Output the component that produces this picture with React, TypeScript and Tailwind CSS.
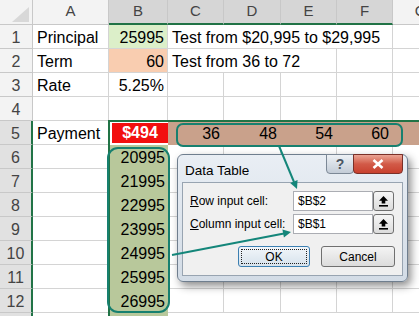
import React from "react"

const COLS = ["w-[76px]", "w-[59px]", "w-[56px]", "w-[57px]", "w-[56px]", "w-[56px]", "w-[56px]"]
const LETTERS = ["A", "B", "C", "D", "E", "F", "G"]

type CellDef = {
  text?: string
  w: string
  align?: "left" | "right"
  cls?: string
  noBorder?: boolean
}

function Cell({ c }: { c: CellDef }) {
  return (
    <div
      className={`${c.w} shrink-0 whitespace-nowrap overflow-visible pt-[3px] leading-[20px] ${
        c.noBorder ? "" : "border-r border-b border-[#d4d4d4]"
      } ${c.align === "right" ? "text-right pr-[3px]" : "pl-[4px]"} ${c.cls ?? ""}`}
    >
      {c.text}
    </div>
  )
}

function RowHead({ n, selected }: { n: number; selected: boolean }) {
  return (
    <div
      className={`w-[33px] shrink-0 text-center text-[#444] pt-[3px] leading-[20px] border-b border-[#c8c8c8] ${
        selected ? "bg-[#e1e1e1] border-r-2 border-r-[#217346]" : "bg-[#f3f3f3] border-r border-r-[#c8c8c8]"
      }`}
    >
      {n}
    </div>
  )
}

function blankRow(from: number): CellDef[] {
  return COLS.slice(from).map((w) => ({ w }))
}

function UpIcon() {
  return (
    <svg width="11" height="12" viewBox="0 0 11 12">
      <path d="M5.5 1 L10 5.8 H7.3 V8.6 H3.7 V5.8 H1 Z" fill="#000" />
      <rect x="1" y="10" width="9" height="1.6" fill="#000" />
    </svg>
  )
}

export default function App() {
  const rows: CellDef[][] = [
    [
      { w: COLS[0], text: "Principal" },
      { w: COLS[1], text: "25995", align: "right", cls: "bg-[#dcefc9]" },
      { w: "w-[225px]", text: "Test from $20,995 to $29,995" },
      ...blankRow(6),
    ],
    [
      { w: COLS[0], text: "Term" },
      { w: COLS[1], text: "60", align: "right", cls: "bg-[#f9cdb0]" },
      { w: "w-[169px]", text: "Test from 36 to 72" },
      ...blankRow(5),
    ],
    [
      { w: COLS[0], text: "Rate" },
      { w: COLS[1], text: "5.25%", align: "right" },
      ...blankRow(2),
    ],
    [...blankRow(0)],
  ]

  const amounts = ["20995", "21995", "22995", "23995", "24995", "25995", "26995"]

  return (
    <div className="relative w-[419px] h-[316px] overflow-hidden bg-white font-['Liberation_Sans',Arial,sans-serif] text-[16px] text-black">
      {/* column headers */}
      <div className="flex h-[25px]">
        <div className="w-[33px] shrink-0 bg-[#f3f3f3] border-r border-b border-[#c8c8c8] relative">
          <svg className="absolute left-[12px] top-[7px]" width="17" height="15" viewBox="0 0 17 15">
            <polygon points="17,0 17,15 0,15" fill="#d8d8d8" />
          </svg>
        </div>
        {LETTERS.map((l, i) => {
          const sel = i >= 1 && i <= 5
          return (
            <div
              key={l}
              className={`${COLS[i]} shrink-0 text-center text-[15px] text-[#444] leading-[22px] border-r border-[#c8c8c8] ${
                sel ? "bg-[#d6d6d6] border-b-2 border-b-[#217346]" : "bg-[#f3f3f3] border-b border-b-[#c8c8c8]"
              }`}
            >
              {l}
            </div>
          )
        })}
      </div>

      {rows.map((r, i) => (
        <div key={i} className="flex h-[24px]">
          <RowHead n={i + 1} selected={false} />
          {r.map((c, j) => (
            <Cell key={j} c={c} />
          ))}
        </div>
      ))}

      {/* row 5 */}
      <div className="flex h-[24px]">
        <RowHead n={5} selected />
        <Cell c={{ w: COLS[0], text: "Payment" }} />
        <div className={`${COLS[1]} shrink-0 pl-[3px] pt-[2px] pb-[2px] bg-white`}>
          <div className="h-full bg-[#f20f0f] text-white font-bold text-center leading-[20px]">$494</div>
        </div>
        {["36", "48", "54", "60"].map((v, k) => (
          <div key={v} className={`${COLS[2 + k]} shrink-0 bg-[#c9a18b] text-right pr-[4px] pt-[3px] leading-[20px]`}>
            {v}
          </div>
        ))}
        <div className="flex-1 bg-[#c9a18b]" />
      </div>

      {/* rows 6-12 */}
      {amounts.map((a, i) => (
        <div key={a} className="flex h-[24px]">
          <RowHead n={i + 6} selected />
          <Cell c={{ w: COLS[0] }} />
          <div className={`${COLS[1]} shrink-0 bg-[#b8c89b] text-right pr-[3px] pt-[3px] leading-[20px]`}>{a}</div>
          {blankRow(2).map((c, j) => (
            <Cell key={j} c={c} />
          ))}
        </div>
      ))}
      <div className="flex h-[10px]">
        <div className="w-[33px] shrink-0 bg-[#e1e1e1] border-r-2 border-r-[#217346]" />
        <div className="w-[76px] shrink-0 border-r border-[#d4d4d4]" />
        <div className="w-[59px] shrink-0 bg-[#b8c89b]" />
        <div className="flex-1" />
      </div>

      {/* selection border */}
      <div className="absolute left-[108px] top-[120px] w-[320px] h-[210px] border-t-2 border-l-2 border-[#217346] pointer-events-none" />

      {/* callout outlines */}
      <div className="absolute left-[176px] top-[123px] w-[227px] h-[24px] rounded-[7px] border-2 border-[#17806f]" />
      <div className="absolute left-[107px] top-[147px] w-[63px] h-[166px] rounded-[11px] border-2 border-[#17806f]" />

      {/* Data Table dialog */}
      <div className="absolute left-[177px] top-[154px] w-[231px] h-[128px] rounded-[6px] border border-[#6f7e8e] bg-gradient-to-b from-[#e9eef4] to-[#d3dce6] shadow-[3px_4px_8px_rgba(0,0,0,0.45)] flex flex-col font-['Liberation_Sans',Arial,sans-serif] text-[12px]">
        <div className="relative h-[27px] shrink-0">
          <div className="absolute left-[7px] top-[6px] text-[13.5px] text-black">Data Table</div>
          <div className="absolute left-[148px] top-[-1px] w-[28px] h-[20px] rounded-b-[4px] border border-[#7c8896] bg-gradient-to-b from-[#edf1f5] to-[#c3ccd7] flex items-center justify-center text-[#4a5563] font-bold text-[14px]">
            ?
          </div>
          <div className="absolute left-[175px] top-[-1px] w-[50px] h-[20px] rounded-b-[4px] border border-[#7a3028] bg-gradient-to-b from-[#eaa494] via-[#d25a48] to-[#c8402e] flex items-center justify-center">
            <svg width="12" height="10" viewBox="0 0 12 10">
              <path d="M1.5 1 L10.5 9 M10.5 1 L1.5 9" stroke="#fff" strokeWidth="2.6" />
            </svg>
          </div>
        </div>
        <div className="mx-[4px] mb-[5px] flex-1 border border-[#98a4b1] bg-[#f0f0f0] pl-[7px] pr-[7px] pt-[8px] flex flex-col">
          <div className="flex items-center h-[20px]">
            <div className="w-[103px] shrink-0">
              <span className="underline">R</span>ow input cell:
            </div>
            <div className="w-[80px] h-full border border-[#abadb3] bg-white pl-[4px] leading-[18px]">$B$2</div>
            <div className="w-[21px] h-full rounded-[3px] border border-[#707070] bg-gradient-to-b from-[#f6f6f6] to-[#dcdcdc] flex items-center justify-center">
              <UpIcon />
            </div>
          </div>
          <div className="flex items-center h-[20px] mt-[3px]">
            <div className="w-[103px] shrink-0">
              <span className="underline">C</span>olumn input cell:
            </div>
            <div className="w-[80px] h-full border border-[#abadb3] bg-white pl-[4px] leading-[18px]">$B$1</div>
            <div className="w-[21px] h-full rounded-[3px] border border-[#707070] bg-gradient-to-b from-[#f6f6f6] to-[#dcdcdc] flex items-center justify-center">
              <UpIcon />
            </div>
          </div>
          <div className="flex justify-end gap-[11px] mt-[12px]">
            <div className="w-[72px] h-[21px] rounded-[3px] border border-[#3c7fb1] bg-gradient-to-b from-[#f2f6fa] to-[#d6e2ec] p-[2px]">
              <div className="w-full h-full border border-dotted border-[#222] flex items-center justify-center">OK</div>
            </div>
            <div className="w-[74px] h-[21px] rounded-[3px] border border-[#707070] bg-gradient-to-b from-[#f4f4f4] to-[#dcdcdc] flex items-center justify-center">
              Cancel
            </div>
          </div>
        </div>
      </div>

      {/* arrows */}
      <svg className="absolute left-0 top-0 pointer-events-none" width="419" height="316" viewBox="0 0 419 316">
        <line x1="279" y1="146" x2="294" y2="182" stroke="#14867a" strokeWidth="2" />
        <polygon points="297,189 290.2,183.1 297.6,180.1" fill="#14867a" />
        <line x1="172" y1="255" x2="284" y2="233.5" stroke="#14867a" strokeWidth="2" />
        <polygon points="291,232 283.9,237.4 282.4,229.6" fill="#14867a" />
      </svg>
    </div>
  )
}
